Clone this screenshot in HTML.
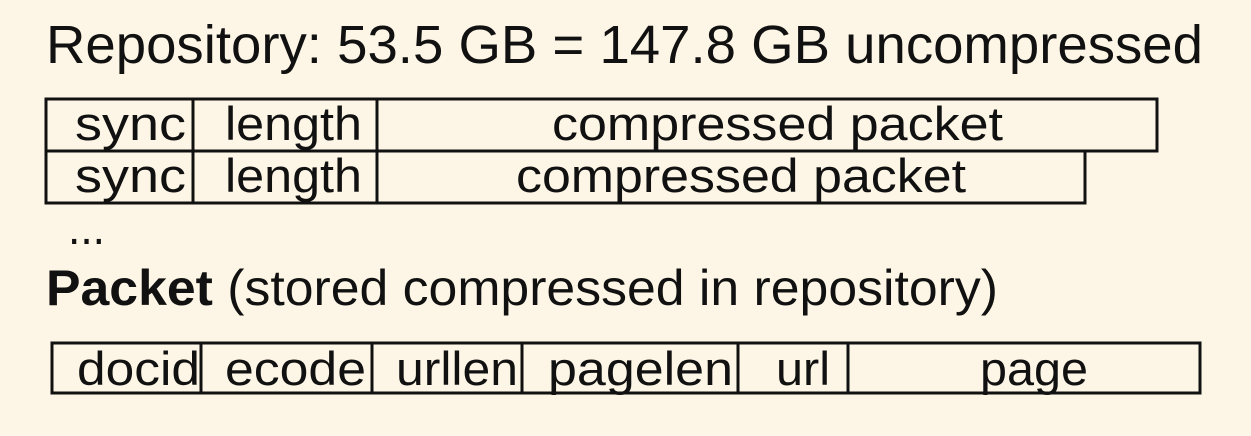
<!DOCTYPE html>
<html><head><meta charset="utf-8"><style>
html,body{margin:0;padding:0;background:#fdf6e6;}
svg{display:block;}
text{font-family:"Liberation Sans",sans-serif;fill:#111;}
</style></head><body>
<svg width="1251" height="436" viewBox="0 0 1251 436">
<rect width="1251" height="436" fill="#fdf6e6"/>
<text x="46" y="63" font-size="54" textLength="1157" lengthAdjust="spacingAndGlyphs">Repository: 53.5 GB = 147.8 GB uncompressed</text>
<g fill="none" stroke="#111" stroke-width="3">
<rect x="46" y="99" width="1111" height="52"/>
<rect x="46" y="151" width="1039" height="52"/>
<line x1="193" y1="99" x2="193" y2="203"/>
<line x1="377" y1="99" x2="377" y2="203"/>
<rect x="52" y="343" width="1148" height="50"/>
<line x1="201" y1="343" x2="201" y2="393"/>
<line x1="372" y1="343" x2="372" y2="393"/>
<line x1="522" y1="343" x2="522" y2="393"/>
<line x1="738" y1="343" x2="738" y2="393"/>
<line x1="848" y1="343" x2="848" y2="393"/>
</g>
<g font-size="47">
<text x="75" y="140" textLength="111" lengthAdjust="spacingAndGlyphs">sync</text>
<text x="225" y="140" textLength="137" lengthAdjust="spacingAndGlyphs">length</text>
<text x="552" y="140" textLength="451" lengthAdjust="spacingAndGlyphs">compressed packet</text>
<text x="75" y="192" textLength="111" lengthAdjust="spacingAndGlyphs">sync</text>
<text x="225" y="192" textLength="137" lengthAdjust="spacingAndGlyphs">length</text>
<text x="516" y="192" textLength="450" lengthAdjust="spacingAndGlyphs">compressed packet</text>
<text x="68" y="244" textLength="37" lengthAdjust="spacingAndGlyphs">...</text>
<text x="77" y="385" textLength="123" lengthAdjust="spacingAndGlyphs">docid</text>
<text x="225" y="385" textLength="141" lengthAdjust="spacingAndGlyphs">ecode</text>
<text x="396" y="385" textLength="122" lengthAdjust="spacingAndGlyphs">urllen</text>
<text x="548" y="385" textLength="185" lengthAdjust="spacingAndGlyphs">pagelen</text>
<text x="776" y="385" textLength="54" lengthAdjust="spacingAndGlyphs">url</text>
<text x="980" y="385" textLength="108" lengthAdjust="spacingAndGlyphs">page</text>
</g>
<text x="46" y="305" font-size="50" textLength="952" lengthAdjust="spacingAndGlyphs"><tspan font-weight="bold">Packet</tspan> (stored compressed in repository)</text>
</svg>
</body></html>
